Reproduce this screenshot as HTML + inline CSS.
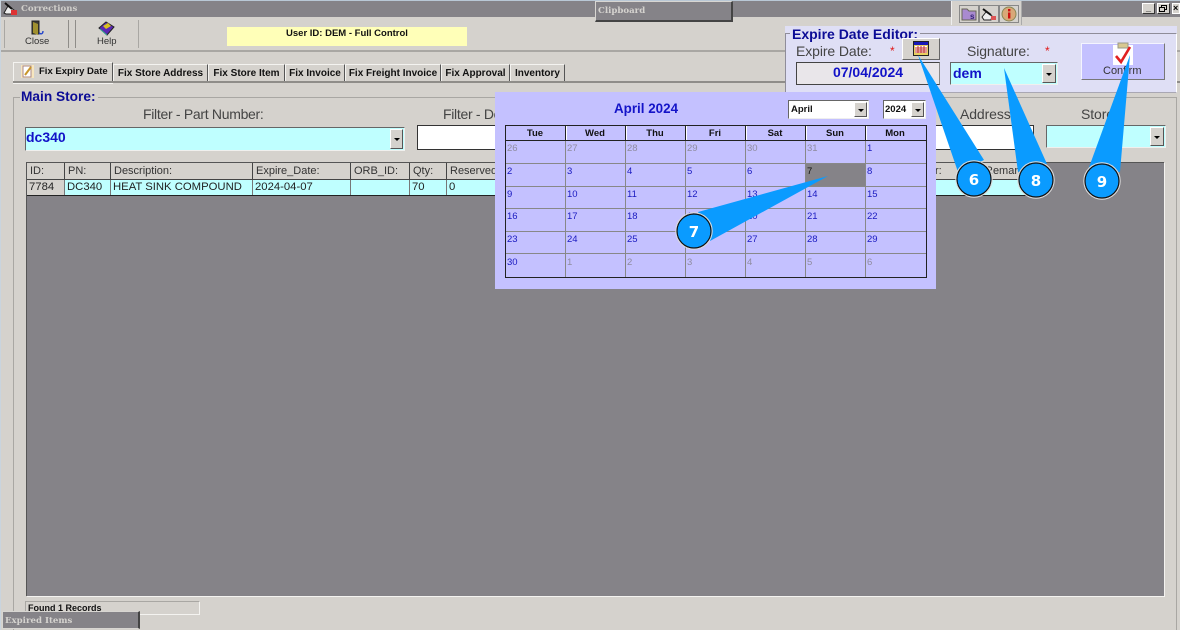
<!DOCTYPE html>
<html><head><meta charset="utf-8"><style>
html,body{margin:0;padding:0}
body{width:1180px;height:630px;position:relative;overflow:hidden;background:#d5d2cd;font-family:"Liberation Sans",sans-serif;color:#222}
div,span{position:absolute;box-sizing:border-box;white-space:nowrap}
svg{position:absolute}
.t{font-size:12px;line-height:14px}
.lab{font-size:14px;line-height:16px;color:#444;letter-spacing:-.1px}
.tab{top:64px;height:18px;background:#d5d2cd;border-top:1px solid #f4f3f0;border-left:1px solid #f4f3f0;border-right:1px solid #555;font-size:10px;font-weight:bold;line-height:17px;text-align:center;color:#111}
.sunk{border-top:1px solid #666;border-left:1px solid #666;border-right:1px solid #f0f0ee;border-bottom:1px solid #f0f0ee}
.arr{background:#d5d2cd;border-top:1px solid #fff;border-left:1px solid #fff;border-right:1px solid #555;border-bottom:1px solid #555}
.arr:after{content:"";position:absolute;left:50%;top:50%;margin:-1px 0 0 -3px;border:3px solid transparent;border-top:3px solid #000;border-bottom:0}
.hc{top:163px;height:17px;font-size:11px;line-height:16px;color:#333;padding-left:3px;border-right:1px solid #444;background:#d5d2cd;border-bottom:1px solid #444}
.dc{top:180px;height:15px;font-size:11.3px;line-height:15px;color:#222;padding-left:2px;border-right:1px solid #777;background:#bfffff}
.ch{top:126px;height:15px;width:60px;font-size:9.5px;font-weight:bold;line-height:15px;text-align:center;color:#111}
.d{font-size:9.5px;line-height:11px;color:#1a1ac0}
.g{color:#8f8ca0}
.cv{top:126px;width:1px;height:151px;background:#888}
.rl{left:505px;width:421px;height:1px;background:#888}
</style></head><body>
<!-- edges -->
<div style="left:0;top:0;width:1180px;height:1px;background:#b9c8d6"></div>
<div style="left:0;top:0;width:1px;height:630px;background:#c9d4de"></div>
<!-- title bar -->
<div style="left:1px;top:1px;width:1179px;height:16px;background:#858388"></div>
<svg style="left:3px;top:2px" width="15" height="14" viewBox="0 0 15 14"><path d="M1 11L5 4l6 4-2 4H3z" fill="#eee" stroke="#222"/><path d="M2 1l7 6" stroke="#111" stroke-width="2"/><rect x="8" y="8" width="6" height="5" fill="#d33"/></svg>
<div style="left:21px;top:2px;font:bold 8.6px/14px 'DejaVu Serif',serif;color:#d0ceca">Corrections</div>
<div style="left:595px;top:1px;width:138px;height:21px;background:#858388;border:1px solid #d8d6d2;border-right:2px solid #444;border-bottom:2px solid #444;font:bold 8.6px/19px 'DejaVu Serif',serif;color:#d5d3cf;padding-left:2px">Clipboard</div>
<!-- top right icons -->
<div style="left:951px;top:1px;width:71px;height:24px;background:#d5d2cd;border-left:1px solid #eee;border-right:1px solid #aaa"></div>
<div style="left:959px;top:5px;width:20px;height:18px;background:#d5d2cd;border:1px solid #888"></div>
<svg style="left:961px;top:7px" width="16" height="14"><path d="M1 2h5l2 2h7v9H1z" fill="#a98ad0" stroke="#665"/><text x="9" y="12" font-size="8" font-weight="bold" fill="#327" font-family="Liberation Sans">s</text></svg>
<div style="left:979px;top:5px;width:20px;height:18px;background:#d5d2cd;border:1px solid #888"></div>
<svg style="left:981px;top:7px" width="16" height="14"><path d="M1 10L5 5l6 4-1 4H3z" fill="#eee" stroke="#222"/><path d="M2 2l8 6" stroke="#111" stroke-width="2"/><rect x="10" y="9" width="5" height="4" fill="#d55"/></svg>
<div style="left:999px;top:5px;width:20px;height:18px;background:#d5d2cd;border:1px solid #888"></div>
<svg style="left:1001px;top:6px" width="16" height="16"><circle cx="8" cy="8" r="7" fill="#d9a878" stroke="#885"/><rect x="7" y="3" width="2.4" height="2.4" fill="#c11"/><rect x="7" y="6.5" width="2.4" height="6" fill="#c11"/></svg>
<!-- window buttons -->
<div style="left:1142px;top:3px;width:13px;height:11px;background:#d5d2cd;border:1px solid #fff;border-right-color:#333;border-bottom-color:#333;font:bold 9px/9px 'Liberation Sans';text-align:center;color:#000">_</div>
<div style="left:1157px;top:3px;width:13px;height:11px;background:#d5d2cd;border:1px solid #fff;border-right-color:#333;border-bottom-color:#333"><span style="left:3px;top:1px;width:6px;height:5px;border:1px solid #000"></span><span style="left:1px;top:3px;width:6px;height:5px;border:1px solid #000;background:#d5d2cd"></span></div>
<div style="left:1172px;top:3px;width:8px;height:11px;background:#d5d2cd;border:1px solid #fff;font:bold 9px/9px 'Liberation Sans';color:#000">×</div>
<!-- toolbar -->
<div style="left:4px;top:20px;width:1px;height:28px;background:#a9a7a3"></div>
<div style="left:68px;top:20px;width:1px;height:28px;background:#8f8d89"></div>
<div style="left:75px;top:20px;width:1px;height:28px;background:#8f8d89"></div>
<div style="left:138px;top:20px;width:1px;height:28px;background:#a9a7a3"></div>
<svg style="left:29px;top:20px" width="16" height="17"><path d="M3 1h7v13H3z" fill="#3e3c34" stroke="#222"/><path d="M4 2l5 2v11l-5-2z" fill="#a09030"/><path d="M10 13c3 2 4 0 4-2" stroke="#2244cc" fill="none" stroke-width="1.4"/></svg>
<div class="t" style="left:25px;top:36px;font-size:9.5px;line-height:12px;color:#333">Close</div>
<svg style="left:98px;top:21px" width="17" height="15"><path d="M1 7l7-6 8 5-7 8z" fill="#5a28b4" stroke="#222"/><path d="M5 5l5-3 3 3-5 3z" fill="#d8c020"/><path d="M2 8l7 6" stroke="#3a9" stroke-width="1"/></svg>
<div class="t" style="left:97px;top:36px;font-size:9.5px;line-height:12px;color:#333">Help</div>
<div style="left:227px;top:27px;width:240px;height:19px;background:#ffffb8;font-size:9.5px;font-weight:bold;line-height:13px;text-align:center;color:#111">User ID: DEM - Full Control</div>
<div style="left:1px;top:50px;width:1179px;height:2px;background:#a9a7a3"></div>
<!-- tabs -->
<div class="tab" style="left:13px;top:62px;width:100px;height:21px;text-align:left;padding-left:25px;line-height:17px;font-size:9.5px;box-shadow:0 1px 0 #f4f3f0">Fix Expiry Date</div>
<svg style="left:20px;top:64px" width="15" height="15"><rect x="1" y="1" width="13" height="13" fill="#f7e6bf"/><rect x="3" y="2" width="8" height="11" fill="#fff" stroke="#a88"/><path d="M5 11l6-8" stroke="#c8962c" stroke-width="2"/></svg>
<div class="tab" style="left:113px;width:95px">Fix Store Address</div>
<div class="tab" style="left:208px;width:77px">Fix Store Item</div>
<div class="tab" style="left:285px;width:60px">Fix Invoice</div>
<div class="tab" style="left:345px;width:96px">Fix Freight Invoice</div>
<div class="tab" style="left:441px;width:69px">Fix Approval</div>
<div class="tab" style="left:510px;width:55px">Inventory</div>
<div style="left:13px;top:81px;width:772px;height:2px;background:#8f8d89"></div>
<div style="left:785px;top:81px;width:395px;height:2px;background:#8f8d89"></div>
<!-- main group -->
<div style="left:13px;top:97px;width:1164px;height:533px;border:1px solid #a9a7a3;border-bottom:0"></div>
<div style="left:20px;top:89px;background:#d5d2cd;padding:0 2px 0 1px;font-size:13.7px;font-weight:bold;line-height:16px;color:#0c0c96;height:16px">Main Store:</div>
<div class="lab" style="left:143px;top:106px;letter-spacing:-.3px">Filter - Part Number:</div>
<div class="lab" style="left:443px;top:106px;letter-spacing:-.3px">Filter - Description:</div>
<div class="lab" style="left:960px;top:106px">Address:</div>
<div class="lab" style="left:1081px;top:106px">Store:</div>
<div class="sunk" style="left:25px;top:127px;width:380px;height:24px;background:#bfffff;font-size:14px;font-weight:bold;line-height:19px;color:#1212c8;padding-left:0">dc340</div>
<div class="arr" style="left:390px;top:129px;width:13px;height:20px"></div>
<div class="sunk" style="left:417px;top:125px;width:617px;height:25px;background:#fff;border-color:#333"></div>
<div class="sunk" style="left:1046px;top:125px;width:120px;height:23px;background:#bfffff"></div>
<div class="arr" style="left:1150px;top:127px;width:14px;height:19px"></div>
<!-- table -->
<div style="left:26px;top:162px;width:1138px;height:434px;background:#858388;border-top:1px solid #555;border-left:1px solid #555;box-shadow:1px 1px 0 #f4f3f0"></div>
<div class="hc" style="left:27px;width:38px">ID:</div>
<div class="hc" style="left:65px;width:46px">PN:</div>
<div class="hc" style="left:111px;width:142px">Description:</div>
<div class="hc" style="left:253px;width:98px">Expire_Date:</div>
<div class="hc" style="left:351px;width:59px">ORB_ID:</div>
<div class="hc" style="left:410px;width:37px">Qty:</div>
<div class="hc" style="left:447px;width:50px;border-right:0">Reserved</div>
<div class="hc" style="left:935px;width:30px;border-right:1px solid #444;padding-left:0;overflow:hidden">r:</div>
<div class="hc" style="left:965px;width:68px;padding-left:20px;overflow:hidden;border-right:0">Remarks:</div>
<div class="dc" style="left:27px;width:38px;background:#d5d2cd">7784</div>
<div class="dc" style="left:65px;width:46px">DC340</div>
<div class="dc" style="left:111px;width:142px">HEAT SINK COMPOUND</div>
<div class="dc" style="left:253px;width:98px">2024-04-07</div>
<div class="dc" style="left:351px;width:59px"></div>
<div class="dc" style="left:410px;width:37px">70</div>
<div class="dc" style="left:447px;width:50px;border-right:0">0</div>
<div class="dc" style="left:935px;width:98px;border-right:0"></div>
<div style="left:27px;top:195px;width:470px;height:1px;background:#222"></div>
<div style="left:935px;top:195px;width:98px;height:1px;background:#222"></div>
<!-- status -->
<div style="left:25px;top:601px;width:175px;height:14px;border:1px solid #a9a7a3;border-bottom-color:#f4f3f0;border-right-color:#f4f3f0;font-size:9px;font-weight:bold;line-height:12px;color:#111;padding-left:2px;overflow:hidden">Found 1 Records</div>
<div style="left:2px;top:611px;width:138px;height:18px;background:#858388;border:1px solid #d8d6d2;border-right:2px solid #444;font:bold 8.6px/18px 'DejaVu Serif',serif;color:#d5d3cf;padding-left:2px">Expired Items</div>
<!-- expire date editor -->
<div style="left:785px;top:26px;width:392px;height:67px;background:#dfdff5"></div>
<div style="left:785px;top:33px;width:392px;height:60px;border:1px solid #8f8d99;border-bottom:1px solid #a9a7b3;border-right-color:#fff"></div>
<div style="left:790px;top:26px;background:#dfdff5;padding:0 2px;font-size:14px;font-weight:bold;line-height:16px;color:#0c0c96">Expire Date Editor:</div>
<div class="lab" style="left:796px;top:43px">Expire Date:</div>
<div style="left:890px;top:44px;font-size:12px;line-height:14px;color:#e01818">*</div>
<div style="left:902px;top:38px;width:38px;height:22px;background:#d5d2cd;border:1px solid #fff;border-right-color:#666;border-bottom-color:#666"></div>
<svg style="left:913px;top:41px" width="16" height="15"><rect x=".5" y=".5" width="15" height="14" fill="#e8d060" stroke="#222"/><rect x="1" y="1" width="14" height="3" fill="#1818b8"/><rect x="2" y="5" width="12" height="7" fill="#fff"/><path d="M2 7h12M2 9h12M2 11h12M5 5v7M8 5v7M11 5v7" stroke="#c03030" stroke-width="1"/></svg>
<div style="left:796px;top:62px;width:144px;height:23px;background:#e9e6ea;border:1px solid #444;border-right-color:#888;font-size:14px;font-weight:bold;line-height:18px;text-align:center;color:#1212c8">07/04/2024</div>
<div class="lab" style="left:967px;top:43px">Signature:</div>
<div style="left:1045px;top:44px;font-size:12px;line-height:14px;color:#e01818">*</div>
<div class="sunk" style="left:950px;top:62px;width:108px;height:23px;background:#bfffff;font-size:14px;font-weight:bold;line-height:20px;color:#1212c8;padding-left:2px">dem</div>
<div class="arr" style="left:1042px;top:64px;width:14px;height:19px"></div>
<div style="left:1081px;top:43px;width:84px;height:37px;background:#c4c1ff;border:1px solid #f4f4ff;border-right-color:#777;border-bottom-color:#777"></div>
<svg style="left:1111px;top:42px" width="24" height="24"><rect x="2" y="3" width="20" height="20" fill="#fff"/><rect x="7" y="1" width="10" height="5" fill="#d8c890" stroke="#998"/><path d="M5 14l5 6L19 5" stroke="#e02020" stroke-width="2.6" fill="none"/></svg>
<div style="left:1103px;top:65px;font-size:11px;line-height:13px;color:#333">Confirm</div>
<!-- calendar -->
<div style="left:495px;top:92px;width:441px;height:197px;background:#c4c1ff"></div>
<div style="left:614px;top:101px;font-size:13.4px;font-weight:bold;line-height:16px;color:#1414c8">April 2024</div>
<div style="left:788px;top:100px;width:81px;height:19px;background:#fff;border:1px solid #666;border-right-color:#eee;border-bottom-color:#eee;font-size:9.5px;font-weight:bold;line-height:18px;color:#111;padding-left:2px">April</div>
<div class="arr" style="left:854px;top:102px;width:13px;height:15px"></div>
<div style="left:883px;top:100px;width:43px;height:19px;background:#fff;border:1px solid #666;border-right-color:#eee;border-bottom-color:#eee;font-size:9.5px;font-weight:bold;line-height:18px;color:#111;padding-left:1px">2024</div>
<div class="arr" style="left:911px;top:102px;width:13px;height:15px"></div>
<div style="left:805px;top:164px;width:60px;height:22px;background:#858388"></div>
<div class="rl" style="top:163px"></div><div class="rl" style="top:186px"></div><div class="rl" style="top:208px"></div><div class="rl" style="top:231px"></div><div class="rl" style="top:253px"></div>
<div class="cv" style="left:565px"></div><div class="cv" style="left:625px"></div><div class="cv" style="left:685px"></div><div class="cv" style="left:745px"></div><div class="cv" style="left:805px"></div><div class="cv" style="left:865px"></div>
<div style="left:505px;top:125px;width:422px;height:153px;border:1px solid #222"></div>
<div style="left:505px;top:140px;width:422px;height:1px;background:#222"></div>
<div style="left:565px;top:126px;width:1px;height:14px;background:#222;box-shadow:1px 0 0 #fff"></div><div style="left:625px;top:126px;width:1px;height:14px;background:#222;box-shadow:1px 0 0 #fff"></div><div style="left:685px;top:126px;width:1px;height:14px;background:#222;box-shadow:1px 0 0 #fff"></div><div style="left:745px;top:126px;width:1px;height:14px;background:#222;box-shadow:1px 0 0 #fff"></div><div style="left:805px;top:126px;width:1px;height:14px;background:#222;box-shadow:1px 0 0 #fff"></div><div style="left:865px;top:126px;width:1px;height:14px;background:#222;box-shadow:1px 0 0 #fff"></div>
<div class="ch" style="left:505px">Tue</div><div class="ch" style="left:565px">Wed</div><div class="ch" style="left:625px">Thu</div><div class="ch" style="left:685px">Fri</div><div class="ch" style="left:745px">Sat</div><div class="ch" style="left:805px">Sun</div><div class="ch" style="left:865px">Mon</div>
<div class="d g" style="left:507px;top:143px">26</div><div class="d g" style="left:567px;top:143px">27</div><div class="d g" style="left:627px;top:143px">28</div><div class="d g" style="left:687px;top:143px">29</div><div class="d g" style="left:747px;top:143px">30</div><div class="d g" style="left:807px;top:143px">31</div><div class="d" style="left:867px;top:143px">1</div>
<div class="d" style="left:507px;top:166px">2</div><div class="d" style="left:567px;top:166px">3</div><div class="d" style="left:627px;top:166px">4</div><div class="d" style="left:687px;top:166px">5</div><div class="d" style="left:747px;top:166px">6</div><div class="d" style="left:807px;top:166px;color:#111">7</div><div class="d" style="left:867px;top:166px">8</div>
<div class="d" style="left:507px;top:189px">9</div><div class="d" style="left:567px;top:189px">10</div><div class="d" style="left:627px;top:189px">11</div><div class="d" style="left:687px;top:189px">12</div><div class="d" style="left:747px;top:189px">13</div><div class="d" style="left:807px;top:189px">14</div><div class="d" style="left:867px;top:189px">15</div>
<div class="d" style="left:507px;top:211px">16</div><div class="d" style="left:567px;top:211px">17</div><div class="d" style="left:627px;top:211px">18</div><div class="d" style="left:687px;top:211px">19</div><div class="d" style="left:747px;top:211px">20</div><div class="d" style="left:807px;top:211px">21</div><div class="d" style="left:867px;top:211px">22</div>
<div class="d" style="left:507px;top:234px">23</div><div class="d" style="left:567px;top:234px">24</div><div class="d" style="left:627px;top:234px">25</div><div class="d" style="left:687px;top:234px">26</div><div class="d" style="left:747px;top:234px">27</div><div class="d" style="left:807px;top:234px">28</div><div class="d" style="left:867px;top:234px">29</div>
<div class="d" style="left:507px;top:257px">30</div><div class="d g" style="left:567px;top:257px">1</div><div class="d g" style="left:627px;top:257px">2</div><div class="d g" style="left:687px;top:257px">3</div><div class="d g" style="left:747px;top:257px">4</div><div class="d g" style="left:807px;top:257px">5</div><div class="d g" style="left:867px;top:257px">6</div>
<!-- callouts -->
<svg style="left:0;top:0" width="1180" height="630" font-family="DejaVu Sans" font-weight="bold" font-size="15" text-anchor="middle">
<g fill="#0a9bff">
<polygon points="918,55 958,172 984,160"/>
<polygon points="1004,68 1018,172 1047,164"/>
<polygon points="1130,55 1088,170 1120,172"/>
<polygon points="828,176 698,212 710,241"/>
</g>
<g fill="#0a9bff" stroke="#111" stroke-width="1.2">
<circle cx="974" cy="179" r="17"/><circle cx="1036" cy="180" r="17"/><circle cx="1102" cy="181" r="17"/><circle cx="694" cy="231" r="17"/>
</g>
<g fill="none" stroke="#dcdcdc" stroke-width="1">
<circle cx="974" cy="179" r="18.2"/><circle cx="1036" cy="180" r="18.2"/><circle cx="1102" cy="181" r="18.2"/><circle cx="694" cy="231" r="18.2"/>
</g>
<g fill="#fff">
<text x="974" y="185">6</text><text x="1036" y="186">8</text><text x="1102" y="187">9</text><text x="694" y="237">7</text>
</g>
</svg>
</body></html>
